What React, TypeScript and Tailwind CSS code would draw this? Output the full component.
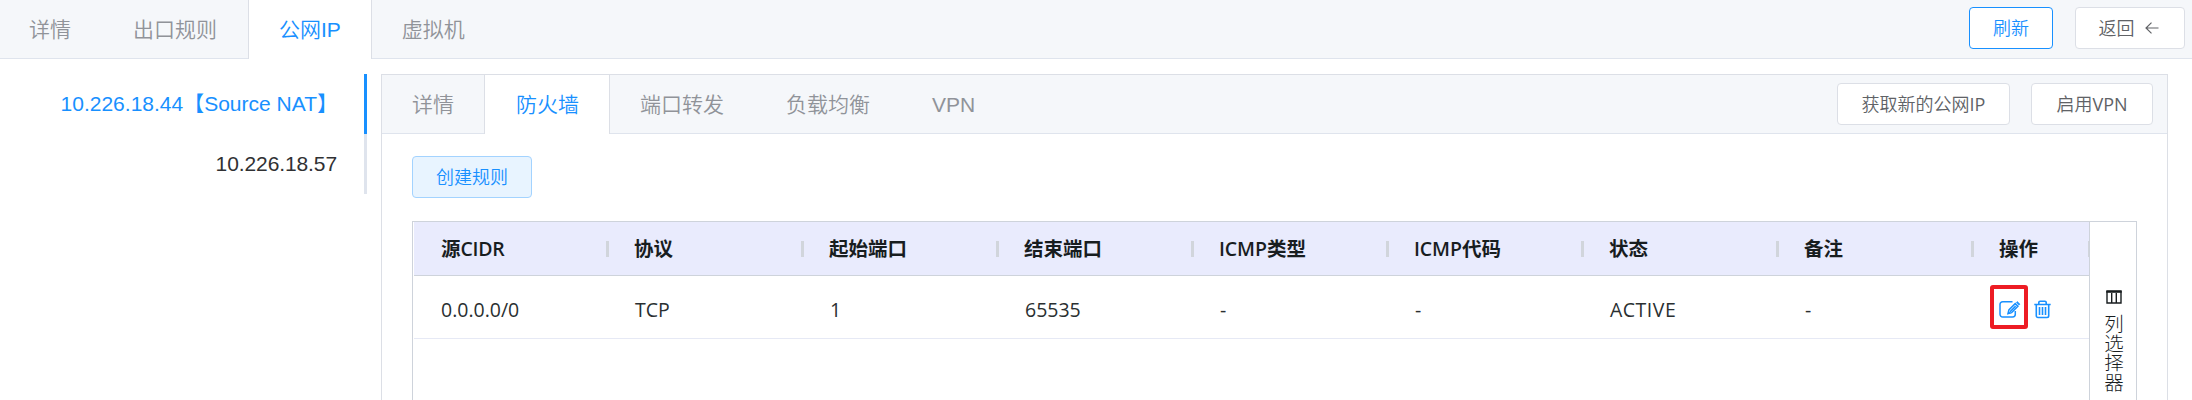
import React from "react";

const arial = "font-['Liberation_Sans','Noto_Sans_CJK_SC',sans-serif]";
const ui = "font-['Open_Sans','Noto_Sans_CJK_SC',sans-serif]";

type TabKind = "first" | "innerFirst" | "active" | "innerActive" | "afterActive" | "plain";

const tabStyles: Record<TabKind, string> = {
  first: "pl-[29px] pr-[31px] text-[#909399]",
  innerFirst: "px-[30px] text-[#909399]",
  active: "-mb-px border-x border-[#dcdfe6] bg-white px-[30px] pb-px text-[#1890ff]",
  innerActive: "-mb-px border-x border-[#dcdfe6] bg-white pl-[31px] pr-[30px] pb-px text-[#1890ff]",
  afterActive: "pl-[30px] pr-[31px] text-[#909399]",
  plain: "px-[31px] text-[#909399]",
};

function Tab({ label, kind = "plain" }: { label: string; kind?: TabKind }) {
  return <div className={`flex items-center pt-px ${tabStyles[kind]}`}>{label}</div>;
}

function Button({ className, children }: { className: string; children: React.ReactNode }) {
  return (
    <button className={`flex h-[42px] items-center justify-center whitespace-nowrap rounded-[4px] border text-[18px] font-[350] leading-none ${ui} ${className}`}>
      {children}
    </button>
  );
}

function BackArrow() {
  return (
    <svg width="14" height="12" viewBox="0 0 14 12" fill="none" stroke="#606266" strokeWidth="1.2" className="ml-[10px]">
      <path d="M13.5 6H1M6.500 .6 1 6l5.500 5.400" />
    </svg>
  );
}

function EditIcon() {
  return (
    <svg width="22" height="19" viewBox="0 0 22 19" fill="none" stroke="#1890ff" strokeWidth="1.500">
      <path d="M13.500 1.700H3.700A2.700 2.700 0 0 0 1 4.400v9.900A2.700 2.700 0 0 0 3.700 17h9.900a2.700 2.700 0 0 0 2.700-2.700V11" />
      <path d="m9 13.700.9-3.800 6.300-6.300 2.700 2.700-6.300 6.300z" />
      <path d="m11 11.800 5.700-5.700" strokeWidth="1.500" />
      <path d="m17.300 2.500 1-1 2.700 2.700-1 1z" fill="#1890ff" strokeWidth=".6" />
      <path d="m8.700 14 .7-3 2.300 2.300z" fill="#1890ff" stroke="none" />
    </svg>
  );
}

function TrashIcon() {
  return (
    <svg width="17" height="19" viewBox="0 0 17 19" fill="none" stroke="#1890ff" strokeWidth="1.600">
      <path d="M.3 4.500h16.400M4.800 4.300V2.500a1.300 1.300 0 0 1 1.300-1.300h4.800a1.300 1.300 0 0 1 1.300 1.300v1.800M2.300 4.500v11.300A1.700 1.700 0 0 0 4 17.500h9a1.700 1.700 0 0 0 1.700-1.700V4.500M5.500 7v8M8.500 7v8M11.500 7v8" />
    </svg>
  );
}

function ColumnsIcon() {
  return (
    <svg width="16" height="14" viewBox="0 0 16 14" fill="none" stroke="#181d1f" strokeWidth="1.400">
      <path d="M1 1v12h14V1M5.700 3v10M10.300 3v10" />
      <path d="M.3 1.500h15.400" strokeWidth="2.600" />
    </svg>
  );
}

const columns = [
  { latin: "", pre: "源", post: "CIDR", value: "0.0.0.0/0", tracking: "" },
  { latin: "", pre: "协议", post: "", value: "TCP", tracking: "" },
  { latin: "", pre: "起始端口", post: "", value: "1", tracking: "" },
  { latin: "", pre: "结束端口", post: "", value: "65535", tracking: "" },
  { latin: "ICMP", pre: "类型", post: "", value: "-", tracking: "" },
  { latin: "ICMP", pre: "代码", post: "", value: "-", tracking: "" },
  { latin: "", pre: "状态", post: "", value: "ACTIVE", tracking: "tracking-[0.500px]" },
  { latin: "", pre: "备注", post: "", value: "-", tracking: "" },
];

function HeaderCell({ latin, pre, post, className }: { latin: string; pre: string; post: string; className: string }) {
  return (
    <div className={`flex h-full shrink-0 items-center justify-between ${className}`}>
      <span className="whitespace-nowrap text-[19.500px] font-bold">
        <span className="font-semibold tracking-[-0.100px]">{latin}</span>
        {pre}
        <span className="font-semibold tracking-[-0.300px]">{post}</span>
      </span>
      <i className="h-4 w-[3px] shrink-0 bg-[#d1d5dc]" />
    </div>
  );
}

export default function App() {
  return (
    <div className={`h-[400px] w-[2192px] overflow-hidden bg-white ${arial}`}>
      <header className="flex h-[59px] justify-between border-b border-[#dfe4ed] bg-[#f5f7fa]">
        <nav className="flex text-[21px] font-[350]">
          <Tab label="详情" kind="first" />
          <Tab label="出口规则" />
          <Tab label="公网IP" kind="active" />
          <Tab label="虚拟机" kind="afterActive" />
        </nav>
        <div className="flex gap-[22px] pr-[7px] pt-[7px]">
          <Button className="w-[84px] border-[#1890ff] bg-white text-[#1890ff]">刷新</Button>
          <Button className="w-[110px] border-[#dcdfe6] bg-white pr-[3px] text-[#606266]">返回<BackArrow /></Button>
        </div>
      </header>

      <div className="flex pt-[15px]">
        <aside className="w-[367px] text-right text-[21px] leading-[60px]">
          <div className="h-[60px] border-r-[3px] border-[#1890ff] pr-[26px] text-[#1890ff]">10.226.18.44【Source NAT】</div>
          <div className="h-[60px] border-r-[3px] border-[#dfe4ed] pr-[27px] tracking-[-0.100px] text-[#303133]">10.226.18.57</div>
        </aside>

        <main className="ml-[14px] h-[400px] w-[1787px] border border-[#dcdfe6]">
          <div className="flex h-[59px] justify-between border-b border-[#dfe4ed] bg-[#f5f7fa]">
            <nav className="flex text-[21px] font-[350]">
              <Tab label="详情" kind="innerFirst" />
              <Tab label="防火墙" kind="innerActive" />
              <Tab label="端口转发" kind="afterActive" />
              <Tab label="负载均衡" />
              <Tab label="VPN" />
            </nav>
            <div className="flex gap-[21px] pr-[14px] pt-[8px]">
              <Button className="w-[173px] border-[#dcdfe6] bg-white text-[#606266]">获取新的公网<span className="font-normal">IP</span></Button>
              <Button className="w-[122px] border-[#dcdfe6] bg-white text-[#606266]">启用<span className="font-normal">VPN</span></Button>
            </div>
          </div>

          <div className="pl-[30px] pt-[22px]">
            <Button className="w-[120px] border-[#a3d3ff] bg-[#e8f4ff] text-[#1890ff]">创建规则</Button>

            <section className={`mt-[23px] flex h-[240px] w-[1725px] border border-[#ced3db] ${ui} text-[#181d1f]`}>
              <div className="w-[1676px] shrink-0 overflow-hidden pl-px">
                <div className="flex h-[54px] items-center border-b border-[#ced3db] bg-[#e9ebfd]">
                  {columns.map((c, i) => (
                    <HeaderCell key={i} latin={c.latin} pre={c.pre} post={c.post} className={i === 0 ? "w-[195px] pl-[27px]" : "w-[195px] pl-[25px]"} />
                  ))}
                  <HeaderCell latin="" pre="操作" post="" className="w-[117px] pl-[25px]" />
                </div>
                <div className="flex h-[63px] items-center border-b border-[#e6e9f5] pt-[5px] text-[19.500px] font-normal text-[#2a2f31]">
                  {columns.map((c, i) => (
                    <div key={i} className={`w-[195px] shrink-0 ${i === 0 ? "pl-[27px]" : "pl-[26px]"} ${c.tracking}`}>{c.value}</div>
                  ))}
                  <div className="-mt-[5px] flex shrink-0 items-center gap-[6px] pl-[16px]">
                    <div className="flex h-[44px] w-[38px] items-center justify-center rounded-[3px] border-4 border-[#ed1c24] pl-[2px] pt-[4px]">
                      <EditIcon />
                    </div>
                    <div className="pt-[5px]">
                      <TrashIcon />
                    </div>
                  </div>
                </div>
              </div>
              <aside className="flex w-[47px] flex-col items-center border-l border-[#ced3db] pl-[2px] pt-[68px] text-[19.500px] font-light">
                <ColumnsIcon />
                <span className="mt-[10px] w-[20px] break-all text-center leading-[19.500px]">列选择器</span>
              </aside>
            </section>
          </div>
        </main>
      </div>
    </div>
  );
}
